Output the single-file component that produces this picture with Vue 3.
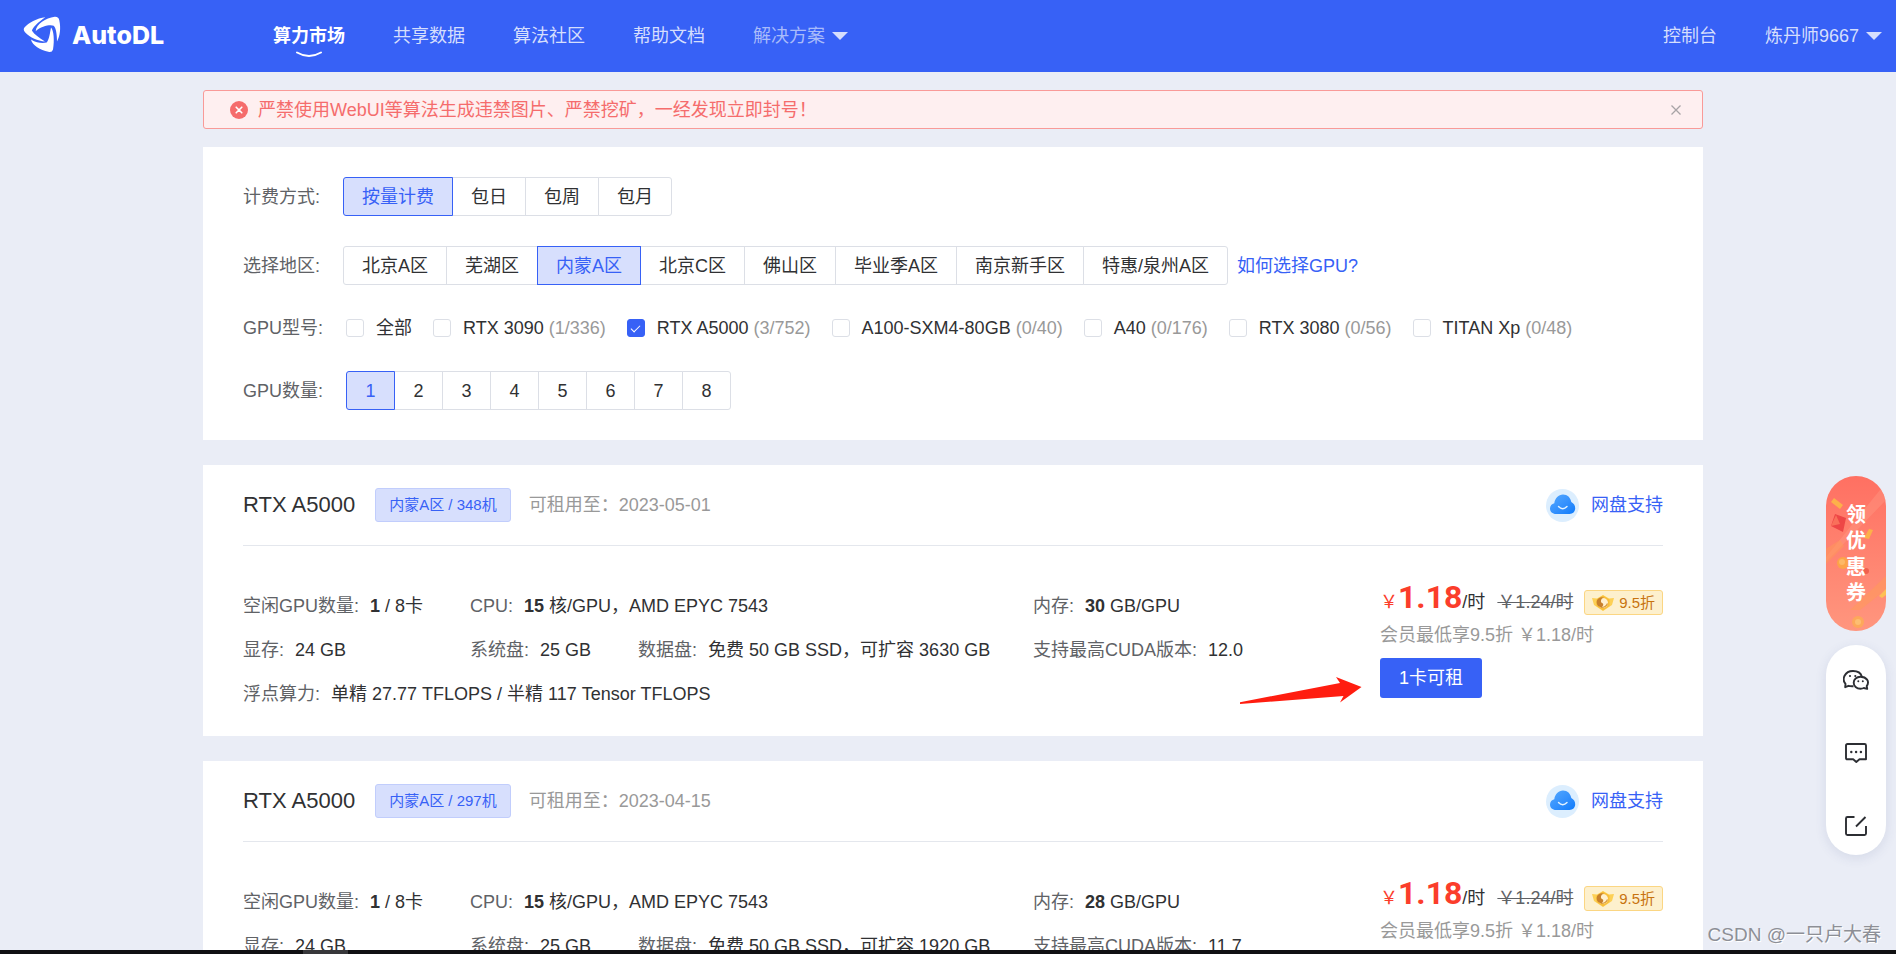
<script setup>
import { ref } from 'vue'

const navItems = ['算力市场', '共享数据', '算法社区', '帮助文档']
const activeNav = ref('算力市场')

const billing = ['按量计费', '包日', '包周', '包月']
const activeBilling = ref('按量计费')

const regions = ['北京A区', '芜湖区', '内蒙A区', '北京C区', '佛山区', '毕业季A区', '南京新手区', '特惠/泉州A区']
const activeRegion = ref('内蒙A区')

const models = ref([
  { name: '全部', count: '', checked: false },
  { name: 'RTX 3090', count: '(1/336)', checked: false },
  { name: 'RTX A5000', count: '(3/752)', checked: true },
  { name: 'A100-SXM4-80GB', count: '(0/40)', checked: false },
  { name: 'A40', count: '(0/176)', checked: false },
  { name: 'RTX 3080', count: '(0/56)', checked: false },
  { name: 'TITAN Xp', count: '(0/48)', checked: false }
])

const counts = [1, 2, 3, 4, 5, 6, 7, 8]
const activeCount = ref(1)
const showAlert = ref(true)

const machines = [
  { id: 348, until: '2023-05-01', memory: 30, expand: 3630, cuda: '12.0', pointed: true },
  { id: 297, until: '2023-04-15', memory: 28, expand: 1920, cuda: '11.7', pointed: false }
]
</script>

<template>
  <div class="shell">
    <header class="topbar">
      <a class="brand" href="#">
        <svg class="brand-mark" viewBox="70 49 114 110" aria-hidden="true">
          <path d="M137 52C112 54 86 70 75 82Q69 89 76 97C92 114 114 122 136 125C118 114 104 104 97 93C96 86 116 66 137 52Z" />
          <path d="M108 94C110 72 138 55 165 51Q177 50 179 62C184 86 181 108 172 125C172 104 169 84 162 78C154 73 125 78 108 94Z" />
          <path d="M94 119C112 131 132 130 141 128C149 119 151 98 154 83C162 90 165 122 160 149Q157 159 146 156C122 150 98 137 94 119Z" />
        </svg>
        <span class="brand-name">AutoDL</span>
      </a>
      <nav class="nav">
        <a
          v-for="item in navItems"
          :key="item"
          href="#"
          class="nav-link"
          :class="{ active: item === activeNav }"
          @click.prevent="activeNav = item"
        >
          {{ item }}
          <svg v-if="item === activeNav" class="smile" viewBox="0 0 26 7" aria-hidden="true">
            <path d="M1 1.500Q13 8.500 25 1.500" />
          </svg>
        </a>
        <button type="button" class="menu-button dim">解决方案<i class="caret"></i></button>
      </nav>
      <div class="account">
        <a href="#" class="nav-link">控制台</a>
        <button type="button" class="menu-button">炼丹师9667<i class="caret"></i></button>
      </div>
    </header>

    <main class="content">
      <div class="column">
        <div v-if="showAlert" class="alert" role="alert">
          <svg class="alert-icon" viewBox="0 0 18 18" aria-hidden="true">
            <circle cx="9" cy="9" r="9" fill="#f56c6c" />
            <path d="M6.200 6.200l5.600 5.600M11.800 6.200l-5.600 5.600" stroke="#fff" stroke-width="1.600" stroke-linecap="round" />
          </svg>
          <p class="alert-text">严禁使用WebUI等算法生成违禁图片、严禁挖矿，一经发现立即封号！</p>
          <button type="button" class="alert-close" aria-label="关闭" @click="showAlert = false">
            <svg viewBox="0 0 10 10" aria-hidden="true"><path d="M0.500 0.500l9 9M9.500 0.500l-9 9" /></svg>
          </button>
        </div>

        <section class="panel filters">
          <div class="filter-row">
            <span id="lbl-billing" class="filter-label">计费方式:</span>
            <div class="segments" role="group" aria-labelledby="lbl-billing">
              <button v-for="b in billing" :key="b" type="button" class="segment" :class="{ on: b === activeBilling }" @click="activeBilling = b">{{ b }}</button>
            </div>
          </div>
          <div class="filter-row">
            <span id="lbl-region" class="filter-label">选择地区:</span>
            <div class="segments" role="group" aria-labelledby="lbl-region">
              <button v-for="r in regions" :key="r" type="button" class="segment" :class="{ on: r === activeRegion }" @click="activeRegion = r">{{ r }}</button>
            </div>
            <a class="help-link" href="#">如何选择GPU?</a>
          </div>
          <div class="filter-row models">
            <span class="filter-label">GPU型号:</span>
            <label v-for="m in models" :key="m.name" class="model">
              <input v-model="m.checked" type="checkbox" class="tick" />
              <span>{{ m.name }} <span class="muted">{{ m.count }}</span></span>
            </label>
          </div>
          <div class="filter-row">
            <span id="lbl-count" class="filter-label">GPU数量:</span>
            <div class="segments numbers" role="group" aria-labelledby="lbl-count">
              <button v-for="n in counts" :key="n" type="button" class="segment" :class="{ on: n === activeCount }" @click="activeCount = n">{{ n }}</button>
            </div>
          </div>
        </section>

        <article v-for="m in machines" :key="m.id" class="panel machine">
          <header class="machine-head">
            <h2 class="machine-name">RTX A5000</h2>
            <span class="tag">内蒙A区 / {{ m.id }}机</span>
            <span class="until">可租用至：{{ m.until }}</span>
            <a class="disk" href="#">
              <svg class="disk-icon" viewBox="0 0 33 33" aria-hidden="true">
                <defs>
                  <linearGradient :id="'cloud' + m.id" x1="0" y1="0" x2="1" y2="1">
                    <stop offset="0" stop-color="#55a9ff" />
                    <stop offset="0.550" stop-color="#3390fd" />
                    <stop offset="1" stop-color="#0f7bfb" />
                  </linearGradient>
                </defs>
                <circle cx="16.500" cy="16.500" r="16.500" fill="#dceefe" />
                <path :fill="'url(#cloud' + m.id + ')'" d="M10 25C6.500 25 4 22.700 4 19.500C4 16.800 5.800 14.800 8.300 14.200C9 9 12.500 5.500 17 5.500C21.500 5.500 24.500 8.500 25.300 13C27.800 14.300 29.200 16.500 29.200 19.300C29.200 22.700 26.800 25 23.500 25Z" />
                <path d="M12.500 17.500Q16.700 22 21 17.500" fill="none" stroke="#e3f2ff" stroke-width="1.400" stroke-linecap="round" />
              </svg>
              <span>网盘支持</span>
            </a>
          </header>

          <div class="machine-body">
            <div class="specs">
              <p class="spec"><span class="key">空闲GPU数量:</span><span><b>1</b> / 8卡</span></p>
              <p class="spec"><span class="key">CPU:</span><span><b>15</b> 核/GPU，AMD EPYC 7543</span></p>
              <p class="spec"><span class="key">内存:</span><span><b>{{ m.memory }}</b> GB/GPU</span></p>
              <p class="spec"><span class="key">显存:</span><span>24 GB</span></p>
              <div class="pair">
                <p class="spec"><span class="key">系统盘:</span><span>25 GB</span></p>
                <p class="spec"><span class="key">数据盘:</span><span>免费 50 GB SSD，可扩容 {{ m.expand }} GB</span></p>
              </div>
              <p class="spec"><span class="key">支持最高CUDA版本:</span><span>{{ m.cuda }}</span></p>
              <p class="spec wide"><span class="key">浮点算力:</span><span>单精 27.77 TFLOPS / 半精 117 Tensor TFLOPS</span></p>
            </div>
            <div class="offer">
              <div class="price-row">
                <span class="price"><span class="yen">￥</span><strong class="amount">1.18</strong>/时</span>
                <s class="old-price">￥1.24/时</s>
                <span class="discount">
                  <svg class="medal" viewBox="0 0 22 18" aria-hidden="true">
                    <path d="M0 4L5 4.500L11 1L17 4.500L22 4L20 11L17 13L11 17L5 13L2 11Z" fill="#fdd055" />
                    <path d="M4.500 5.500L11 1.500L17.500 5.500V12L11 16.500L4.500 12Z" fill="#f8be3a" />
                    <circle cx="11" cy="9" r="5" fill="#fff0cf" />
                    <path d="M12.500 4.200A5 5 0 1 0 8 13A2.500 2.500 0 0 0 11 9.500A2.600 2.600 0 0 1 12.500 4.200Z" fill="#c8802c" />
                    <path d="M9 13.500Q14 13.500 15.500 9.500" fill="none" stroke="#d99a3c" stroke-width="1.200" />
                  </svg>
                  9.5折
                </span>
              </div>
              <p class="member">会员最低享9.5折 ￥1.18/时</p>
              <button type="button" class="rent">1卡可租</button>
              <svg v-if="m.pointed" class="pointer" viewBox="0 0 124 28" aria-hidden="true">
                <path d="M1 26.300L101 7L97 1L122.500 11L101 26.500L104.500 20L1 28Z" />
              </svg>
            </div>
          </div>
        </article>
      </div>
    </main>

    <aside class="dock">
      <button type="button" class="coupon">
        <svg class="coupon-art" viewBox="0 0 60 155" aria-hidden="true">
          <path d="M-4 86L62 4L62 22L-4 90Z" fill="#ffa08a" opacity="0.350" />
          <path d="M24 134L62 98V112L34 134Z" fill="#ff9c55" opacity="0.500" />
          <path d="M-2 74L14 64L18 70L-2 90Z" fill="#ff9c55" opacity="0.450" />
          <path d="M8 22L17 29L14 33L5 26Z" fill="#fdb04a" />
          <path d="M9 38L20 42L17 56L5 50Z" fill="#ee4646" />
          <path d="M5 50L10 39L14 48Z" fill="#f9705a" />
          <path d="M43 53L47 54L43 63L38 62Z" fill="#fdb04a" />
          <circle cx="17" cy="87" r="6" fill="#fda348" />
          <circle cx="16" cy="86" r="3" fill="#fdb866" />
          <circle cx="32" cy="146" r="6" fill="#fda85a" />
          <circle cx="32" cy="146" r="3" fill="#fdbe72" />
          <path d="M53 120L60 113V119L56 122Z" fill="#fdc054" />
          <circle cx="40" cy="95" r="3" fill="#f0604e" />
        </svg>
        <span class="coupon-text">领优惠券</span>
      </button>
      <div class="tools">
        <button type="button" class="tool" aria-label="微信">
          <svg viewBox="0 0 26 20" aria-hidden="true">
            <path d="M10.500 16.200Q7.500 16.400 5.500 15.800L2.200 17.200L2.500 13.800C-1.500 9.500 1.500 1 10 1C15 1 18 3.500 18.800 6.500" />
            <path d="M17.500 6.700C13.500 6.700 10.700 9.400 10.700 12.700C10.700 16 13.500 18.700 17.500 18.700Q19.500 18.700 20.800 18L24.200 18.900L23.700 16C27 11.500 23.500 6.700 17.500 6.700Z" />
            <g class="dots"><circle cx="7" cy="6" r="1.100" /><circle cx="12.300" cy="6" r="1.100" /><circle cx="15.300" cy="11.300" r="1" /><circle cx="19.800" cy="11.300" r="1" /></g>
          </svg>
        </button>
        <button type="button" class="tool" aria-label="消息">
          <svg viewBox="0 0 26 20" aria-hidden="true">
            <path d="M4.500 1H21.500Q23 1 23 2.500V16.300H16.500L13.300 19L10.200 16.300H4.300Q3 16.300 3 15V2.500Q3 1 4.500 1Z" />
            <g class="dots"><circle cx="8.300" cy="9" r="1.200" /><circle cx="13.100" cy="9" r="1.200" /><circle cx="17.900" cy="9" r="1.200" /></g>
          </svg>
        </button>
        <button type="button" class="tool" aria-label="反馈">
          <svg viewBox="0 0 26 20" aria-hidden="true">
            <path d="M11.500 1H4.500Q3 1 3 2.500V17.500Q3 19 4.500 19H21.500Q23 19 23 17.500V10M13 10.500L22.500 1" />
          </svg>
        </button>
      </div>
    </aside>

    <span class="watermark">CSDN @一只卢大春</span>
    <div class="bottom-strip"><i class="strip-mark"></i></div>
  </div>
</template>

<style>
body {
  margin: 0;
  background: #eaedf6;
}
</style>

<style scoped>
.shell {
  position: relative;
  display: flex;
  flex-direction: column;
  height: 100vh;
  overflow: hidden;
  color: #303133;
  font-family: "Liberation Sans", "Noto Sans CJK SC", sans-serif;
  font-size: 18px;
  line-height: 26px;
}
button {
  margin: 0;
  padding: 0;
  border: 0;
  background: none;
  color: inherit;
  font: inherit;
  cursor: pointer;
}
a {
  color: inherit;
  text-decoration: none;
}
p,
h2 {
  margin: 0;
}
svg {
  display: block;
}

.topbar {
  display: flex;
  flex: none;
  align-items: center;
  height: 72px;
  padding: 0 14px 0 23px;
  background: #3761f6;
  color: #d5defd;
}
.brand {
  display: flex;
  align-items: center;
  gap: 11px;
  width: 250px;
  padding-bottom: 3px;
  color: #fff;
}
.brand-mark {
  width: 38px;
  height: 37px;
  fill: #fff;
}
.brand-name {
  font-family: Inter, sans-serif;
  font-size: 25px;
  font-weight: 800;
}
.nav,
.account {
  display: flex;
  gap: 48px;
}
.account {
  margin-left: auto;
}
.nav-link {
  position: relative;
}
.nav-link.active {
  color: #fff;
  font-weight: 700;
}
.smile {
  position: absolute;
  top: 28px;
  left: 23px;
  width: 26px;
  height: 7px;
  fill: none;
  stroke: #fff;
  stroke-width: 2;
  stroke-linecap: round;
}
.menu-button {
  display: flex;
  align-items: center;
  gap: 7px;
}
.menu-button.dim {
  color: #a9bbfa;
}
.caret {
  border: 8px solid transparent;
  border-top-color: #d5defd;
  border-bottom-width: 0;
}

.content {
  flex: 1;
  min-height: 0;
  overflow: hidden;
  padding: 18px 0 0 10px;
}
.column {
  max-width: 1500px;
  margin: 0 auto;
}
.alert {
  display: flex;
  align-items: center;
  box-sizing: border-box;
  height: 39px;
  margin-bottom: 18px;
  padding: 0 21px 0 26px;
  border: 1px solid #f99a98;
  border-radius: 3px;
  background: #feeff0;
  color: #f56c6c;
}
.alert-icon {
  width: 18px;
  height: 18px;
}
.alert-text {
  margin-left: 10px;
}
.alert-close {
  margin-left: auto;
}
.alert-close svg {
  width: 10px;
  height: 10px;
  stroke: #a8a3a6;
  stroke-width: 1.3;
}

.panel {
  margin-bottom: 25px;
  background: #fff;
}
.filters {
  display: flex;
  flex-direction: column;
  gap: 30px;
  padding: 30px 40px;
}
.filter-row {
  display: flex;
  align-items: center;
}
.filter-label {
  width: 100px;
  color: #606266;
}
.segments {
  display: flex;
}
.segment {
  box-sizing: border-box;
  height: 39px;
  padding: 0 18px;
  border: 1px solid #dcdfe6;
  background: #fff;
  line-height: 36px;
}
.segment + .segment {
  margin-left: -1px;
}
.segment:first-child {
  border-radius: 3px 0 0 3px;
}
.segment:last-child {
  border-radius: 0 3px 3px 0;
}
.segment.on {
  position: relative;
  border-color: #3761f6;
  background: #d7dffd;
  color: #3761f6;
}
.numbers {
  margin-left: 3px;
}
.numbers .segment {
  width: 49px;
  padding: 0;
}
.help-link {
  margin-left: 9px;
  color: #3761f6;
}
.models .filter-label {
  width: 103px;
}
.model {
  display: flex;
  align-items: center;
  gap: 12px;
  margin-right: 21px;
  cursor: pointer;
}
.tick {
  display: grid;
  place-items: center;
  box-sizing: border-box;
  width: 18px;
  height: 18px;
  margin: 0;
  border: 1px solid #dcdfe6;
  border-radius: 3px;
  background: #fff;
  appearance: none;
}
.tick:checked {
  border-color: #3761f6;
  background: #3761f6;
}
.tick:checked::after {
  width: 4px;
  height: 8px;
  margin-bottom: 2px;
  border: solid #fff;
  border-width: 0 1px 1px 0;
  content: "";
  transform: rotate(45deg);
}
.muted {
  color: #999;
}

.machine {
  padding: 0 40px 20px;
}
.machine-head {
  display: flex;
  align-items: center;
  height: 80px;
  border-bottom: 1px solid #e4e7ed;
}
.machine-name {
  font-size: 22px;
  font-weight: 400;
}
.tag {
  margin-left: 20px;
  padding: 3px 13px;
  border: 1px solid #c1cdfc;
  border-radius: 3px;
  background: #d7dffd;
  color: #3761f6;
  font-size: 15px;
}
.until {
  margin-left: 18px;
  color: #999;
}
.disk {
  display: flex;
  align-items: center;
  gap: 12px;
  margin-left: auto;
  color: #3761f6;
}
.disk-icon {
  width: 33px;
  height: 33px;
}
.machine-body {
  display: grid;
  grid-template-columns: 1137fr 283fr;
  padding-top: 38px;
}
.specs {
  display: grid;
  grid-template-columns: 227fr 563fr 347fr;
  grid-auto-rows: 44px;
  align-items: center;
}
.spec {
  display: flex;
  gap: 11px;
  white-space: nowrap;
}
.key {
  color: #606266;
}
.pair {
  display: flex;
  gap: 47px;
}
.wide {
  grid-column: span 2;
}
.offer {
  position: relative;
  white-space: nowrap;
}
.price-row {
  display: flex;
  align-items: baseline;
  height: 38px;
  line-height: 26px;
}
.yen {
  color: #fb3d2b;
}
.amount {
  color: #fb3d2b;
  font-family: Roboto, sans-serif;
  font-size: 32px;
  font-weight: 700;
}
.old-price {
  margin-left: 12px;
  color: #606266;
}
.discount {
  display: flex;
  align-items: center;
  align-self: flex-start;
  gap: 5px;
  margin: 6px 0 0 auto;
  padding: 0 7px;
  border: 1px solid #fbd683;
  border-radius: 3px;
  background: #fdf0cd;
  color: #c8730f;
  font-size: 15px;
  line-height: 23px;
}
.medal {
  width: 22px;
  height: 18px;
}
.member {
  color: #999;
}
.rent {
  height: 40px;
  margin-top: 10px;
  padding: 0 19px;
  border-radius: 3px;
  background: #3761f6;
  color: #fff;
  line-height: 36px;
}
.pointer {
  position: absolute;
  top: 92px;
  left: -141px;
  width: 124px;
  height: 28px;
  fill: #ff1d10;
}

.dock {
  position: absolute;
  top: 476px;
  right: 10px;
  display: flex;
  flex-direction: column;
  gap: 14px;
  width: 60px;
}
.coupon {
  position: relative;
  display: flex;
  align-items: center;
  justify-content: center;
  height: 155px;
  overflow: hidden;
  border-radius: 30px;
  background: linear-gradient(#ff7062, #ff967e);
  color: #fff;
}
.coupon-art {
  position: absolute;
  inset: 0;
  width: 60px;
  height: 155px;
}
.coupon-text {
  position: relative;
  width: 20px;
  font-size: 20px;
  font-weight: 700;
  line-height: 26px;
  word-break: break-all;
}
.tools {
  display: flex;
  flex-direction: column;
  align-items: center;
  justify-content: space-between;
  box-sizing: border-box;
  height: 210px;
  padding: 25px 0 19px;
  border-radius: 30px;
  background: #fff;
  box-shadow: 0 3px 12px rgba(60, 70, 130, 0.12);
}
.tool svg {
  width: 26px;
  height: 20px;
  fill: none;
  stroke: #2c2e33;
  stroke-width: 1.9;
  stroke-linejoin: round;
}
.tool .dots {
  fill: #2c2e33;
  stroke: none;
}

.watermark {
  position: absolute;
  right: 15px;
  bottom: 6px;
  color: #8d8f96;
  font-size: 19px;
  text-shadow: 1px 1px 0 #fff;
}
.bottom-strip {
  flex: none;
  height: 4px;
  padding-left: 303px;
  background: #101012;
}
.strip-mark {
  display: block;
  width: 45px;
  height: 4px;
  background: #37373a;
}
</style>
